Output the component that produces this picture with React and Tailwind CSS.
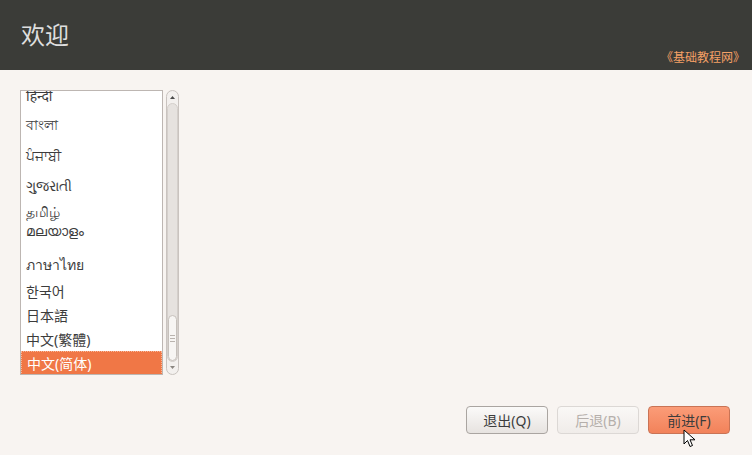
import React from "react";

const rows = [
  { t: "हिन्दी", h: "h-[28px]", cls: "-mt-[10px]" },
  { t: "বাংলা", h: "h-[30px]" },
  { t: "ਪੰਜਾਬੀ", h: "h-[32px]" },
  { t: "ગુજરાતી", h: "h-[29px]" },
  { t: "தமிழ்", h: "h-[22px]" },
  { t: "മലയാളം", h: "h-[27px]", cls: "pb-[10px] text-[12px]" },
  { t: "ภาษาไทย", h: "h-[30px]" },
  { t: "한국어", h: "h-[24px]" },
  { t: "日本語", h: "h-[24px]" },
  { t: "中文(繁體)", h: "h-[24px]" },
];

export default function App() {
  return (
    <div
      className="w-[752px] h-[455px] bg-[#f8f4f1] flex flex-col relative overflow-hidden"
      style={{ fontFamily: '"Noto Sans", "Noto Sans CJK SC", "DejaVu Sans", sans-serif' }}
    >
      <div className="h-[70px] bg-[#3b3c38] flex items-start justify-between px-[21px]">
        <div className="text-[24px] leading-none text-[#dedede] mt-[23px]">欢迎</div>
        <div className="text-[12px] leading-none text-[#f5a066] mt-[52px] -mr-[14px]">《基础教程网》</div>
      </div>
      <div className="flex mt-[20px] ml-[20px]">
        <div className="w-[143px] h-[285px] border border-[#bdb6b2] bg-white overflow-hidden flex flex-col">
          {rows.map((r, i) => (
            <div
              key={i}
              className={`${r.h} ${r.cls || ""} shrink-0 flex items-center pl-[5px] text-[14px] text-[#3c3c3c]`}
            >
              {r.t}
            </div>
          ))}
          <div className="h-[24px] shrink-0 flex items-center pl-[5px] text-[14px] text-white bg-[#f07746] border border-dotted border-[#f8b898]">
            中文(简体)
          </div>
        </div>
        <div className="ml-[3px] w-[13px] h-[285px] rounded-full border border-[#c9c3bf] bg-[#f3f0ee] flex flex-col items-center">
          <svg width="11" height="12" viewBox="0 0 11 12" className="shrink-0">
            <path d="M3 8 L5.5 5 L8 8 Z" fill="#4a4a4a" />
          </svg>
          <div className="flex-1 w-[11px] rounded-full bg-[#e6e2df] border border-[#d4cfcb] flex flex-col justify-end">
            <div className="h-[46px] w-full rounded-full bg-[#f7f5f3] border border-[#c6c0bb] flex flex-col items-center justify-center gap-[2px]">
              <div className="w-[5px] h-px bg-[#b9b3ae]" />
              <div className="w-[5px] h-px bg-[#b9b3ae]" />
              <div className="w-[5px] h-px bg-[#b9b3ae]" />
            </div>
          </div>
          <svg width="11" height="12" viewBox="0 0 11 12" className="shrink-0">
            <path d="M3 4 L5.5 7 L8 4 Z" fill="#8a8580" />
          </svg>
        </div>
      </div>
      <div className="mt-auto mb-[21px] mr-[22px] flex justify-end gap-[9px]">
        <button className="w-[82px] h-[28px] rounded-[4px] border border-[#aaa5a1] bg-gradient-to-b from-[#fbfaf9] to-[#e7e3e0] text-[14px] text-[#3c3c3c]">
          退出(Q)
        </button>
        <button className="w-[82px] h-[28px] rounded-[4px] border border-[#dcd8d5] bg-gradient-to-b from-[#faf8f6] to-[#f0ece9] text-[14px] text-[#b5afab]">
          后退(B)
        </button>
        <button className="w-[82px] h-[28px] rounded-[4px] border border-[#c97355] bg-gradient-to-b from-[#fb9c78] to-[#f2825a] text-[14px] text-[#3c3c3c]">
          前进(F)
        </button>
      </div>
      <svg className="absolute left-[683px] top-[429px]" width="14" height="20" viewBox="0 0 14 20">
        <path d="M1 1 L1 15 L4.5 11.5 L7 17.5 L9.5 16.5 L7 10.8 L12 10.8 Z" fill="#ffffff" stroke="#000000" strokeWidth="1" strokeLinejoin="round" />
      </svg>
    </div>
  );
}
